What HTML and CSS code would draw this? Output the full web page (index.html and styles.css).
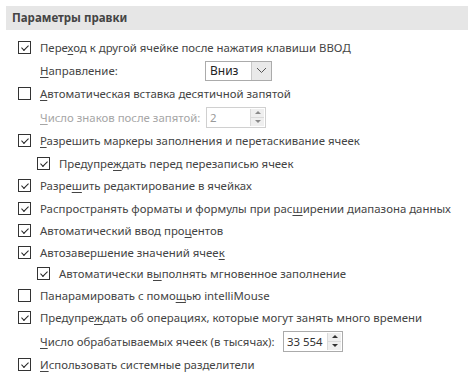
FILE: index.html
```html
<!DOCTYPE html>
<html lang="ru">
<head>
    <meta charset="UTF-8">
    <title>Параметры правки</title>
    <link rel="stylesheet" href="styles.css">
</head>
<body>
    <div class="section-title">Параметры правки</div>
    <div class="options">
        <div class="row r23"><span class="box on"></span><span>Пере<u>х</u>од к другой ячейке после нажатия клавиши ВВОД</span></div>
        <div class="row r23 sub0">
            <span class="label"><u>Н</u>аправление:</span>
            <span class="select"><span class="select-text">Вниз</span><span class="select-btn"><svg width="11" height="7" viewBox="0 0 11 7"><path d="M1 1 L5.5 5.5 L10 1" fill="none" stroke="#555" stroke-width="1"/></svg></span></span>
        </div>
        <div class="row r23"><span class="box"></span><span><u>А</u>втоматическая вставка десятичной запятой</span></div>
        <div class="row r24 sub0 disabled">
            <span class="label label-mid"><u>Ч</u>исло знаков после запятой:</span>
            <span class="spin spin-off"><span class="spin-text">2</span><span class="spin-btns"><span class="up"></span><span class="down"></span></span></span>
        </div>
        <div class="row r23"><span class="box on"></span><span><u>Р</u>азрешить маркеры заполнения и перетаскивание ячеек</span></div>
        <div class="row r22 sub"><span class="box on"></span><span>Предупре<u>ж</u>дать перед перезаписью ячеек</span></div>
        <div class="row r23"><span class="box on"></span><span>Разре<u>ш</u>ить редактирование в ячейках</span></div>
        <div class="row r22"><span class="box on"></span><span>Распространять форматы и формулы при рас<u>ш</u>ирении диапазона данных</span></div>
        <div class="row r22"><span class="box on"></span><span>Автоматический ввод про<u>ц</u>ентов</span></div>
        <div class="row r22"><span class="box on"></span><span>Автозавершение значений ячее<u>к</u></span></div>
        <div class="row r21 sub"><span class="box on"></span><span>Автоматически в<u>ы</u>полнять мгновенное заполнение</span></div>
        <div class="row r22"><span class="box"></span><span>Панарамировать с помо<u>щ</u>ью intelliMouse</span></div>
        <div class="row r23"><span class="box on"></span><span>Предупре<u>ж</u>дать об операциях, которые могут занять много времени</span></div>
        <div class="row r24 sub0">
            <span class="label label-wide"><u>Ч</u>исло обрабатываемых ячеек (в тысячах):</span>
            <span class="spin"><span class="spin-text">33 554</span><span class="spin-btns"><span class="up"></span><span class="down"></span></span></span>
        </div>
        <div class="row r23"><span class="box on"></span><span><u>И</u>спользовать системные разделители</span></div>
    </div>
</body>
</html>
```

FILE: styles.css
```css
* {
    box-sizing: border-box;
    margin: 0;
    padding: 0;
}
body {
    background: #fff;
    font-family: "Noto Sans", "Open Sans", sans-serif;
    font-size: 11.4px;
    color: #444;
    width: 468px;
    height: 375px;
    overflow: hidden;
}
u {
    text-decoration: underline;
    text-underline-offset: 2px;
}
.section-title {
    margin: 6px 0 0 6px;
    height: 24px;
    line-height: 24px;
    padding-left: 6px;
    background: #e6e6e6;
    font-weight: bold;
    font-size: 11.5px;
    color: #444;
}
.options {
    padding-top: 6px;
    padding-left: 18px;
}
.row {
    display: flex;
    align-items: center;
    white-space: nowrap;
}
.r21 { height: 21px; }
.r22 { height: 22px; }
.r23 { height: 23px; }
.r24 { height: 24px; }
.sub {
    padding-left: 19px;
}
.sub0 {
    padding-left: 22px;
}
.box {
    flex: none;
    width: 13px;
    height: 13px;
    border: 1px solid #333;
    margin-right: 9px;
    background: #fff;
    position: relative;
}
.box.on::after {
    content: "";
    position: absolute;
    left: 2px;
    top: 0px;
    width: 6px;
    height: 3px;
    border-left: 1px solid #222;
    border-bottom: 1px solid #222;
    transform: translate(0.5px, 3px) rotate(-45deg);
}
.label {
    flex: none;
    width: 165px;
}
.label-mid {
    width: 166px;
}
.label-wide {
    width: 243px;
}
.disabled .label {
    color: #a6a6a6;
}
.select {
    display: flex;
    width: 67px;
    height: 20px;
    border: 1px solid #ababab;
    background: #fff;
}
.select-text {
    flex: 1;
    padding-left: 4px;
    line-height: 18px;
    color: #222;
    font-size: 12px;
}
.select-btn {
    width: 20px;
    display: flex;
    align-items: center;
    justify-content: center;
    background: #e9e9e9;
    border-left: 1px solid #c8c8c8;
}
.spin {
    display: flex;
    width: 60px;
    height: 21px;
    border: 1px solid #ababab;
    background: #fff;
}
.spin-off {
    border-color: #d0d0d0;
}
.spin-text {
    flex: 1;
    padding-left: 3px;
    line-height: 19px;
    color: #333;
}
.spin-off .spin-text {
    color: #9a9a9a;
}
.spin-btns {
    width: 14px;
    display: flex;
    flex-direction: column;
    border-left: 1px solid #dadada;
    margin: 1px 1px 1px 0;
}
.spin-btns span {
    flex: 1;
    display: flex;
    align-items: center;
    justify-content: center;
    background: #efefef;
}
.spin-btns .up {
    border-bottom: 1px solid #dadada;
}
.spin-btns .up::after {
    content: "";
    border-left: 3px solid transparent;
    border-right: 3px solid transparent;
    border-bottom: 3px solid #333;
}
.spin-btns .down::after {
    content: "";
    border-left: 3px solid transparent;
    border-right: 3px solid transparent;
    border-top: 3px solid #333;
}
.spin-off .spin-btns .up::after {
    border-bottom-color: #8a8a8a;
}
.spin-off .spin-btns .down::after {
    border-top-color: #8a8a8a;
}
```
